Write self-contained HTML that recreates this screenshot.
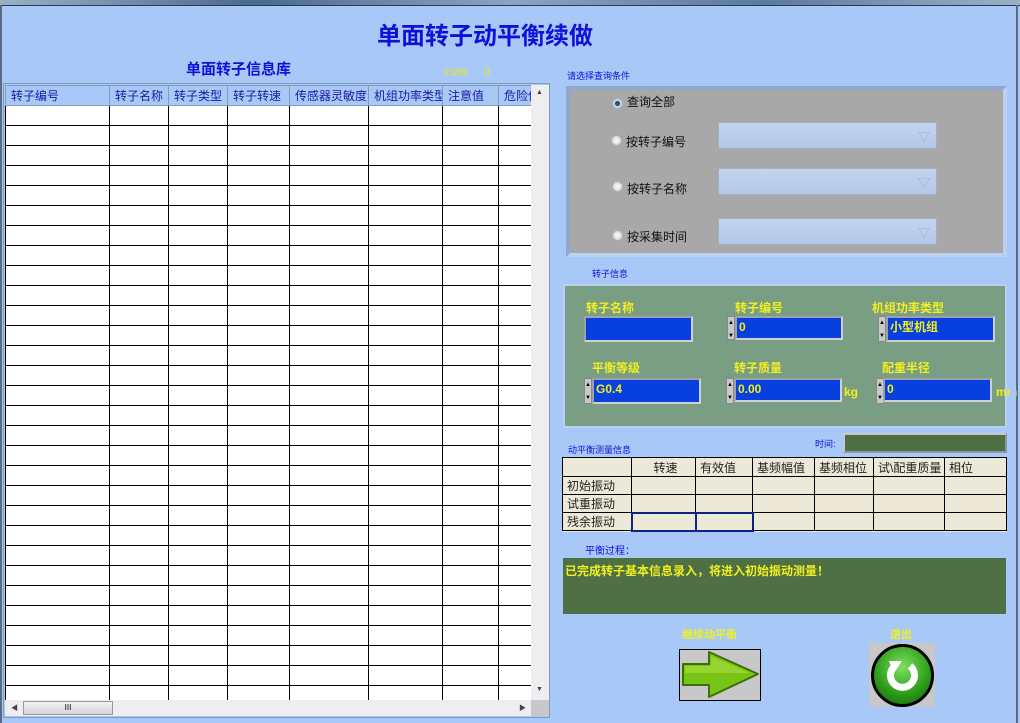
<!DOCTYPE html>
<html><head><meta charset="utf-8"><style>
*{margin:0;padding:0;box-sizing:border-box}
body{width:1020px;height:723px;background:#a8c8f8;position:relative;overflow:hidden;font-family:"Liberation Sans","Noto Sans CJK SC",sans-serif;font-size:12px}
.a{position:absolute}
.topbar{left:0;top:0;width:1020px;height:6px;background:linear-gradient(90deg,#9ab0c8,#4a6a90,#8aa4c4,#5a7aa0,#9ab0c8)}
.lb{left:0;top:5px;width:2px;height:718px;background:#5a6a80}
.rb{left:1016px;top:5px;width:2px;height:718px;background:#5a6a80}
.tb{left:0;top:5px;width:1020px;height:1px;background:#2a3a50}
#grid{left:5px;top:85px;width:526px;height:615px;overflow:hidden;background:#fff}
table.g{border-collapse:collapse;table-layout:fixed;width:560px}
table.g td{border:1px solid #000;height:20px;padding:0 0 0 5px;font-size:12px;color:#1a1aa0;white-space:nowrap;overflow:hidden}
table.g tr.h td{background:#a8c8f8;border-color:#7f9db9;height:20px}
.frame{left:3px;top:83px;width:547px;height:635px;border:1px solid #7f9db9}
.vs{left:531px;top:85px;width:18px;height:615px;background:#eeeef0}
.hs{left:5px;top:700px;width:526px;height:16px;background:#eeeef0}
.gp{left:566px;top:86px;width:441px;height:171px;background:#a8a8a8;border:4px solid #bcd0f0;border-top-color:#90a8d0;border-left-color:#90a8d0}
.combo{width:219px;height:27px;background:linear-gradient(#c4d4ee,#b4c8e8);border:1px solid #a0b0c8}
.combo:after{content:"▽";position:absolute;right:6px;top:5px;color:#a0b0c8;font-size:12px}
.radio{width:11px;height:11px;border-radius:50%;background:radial-gradient(#fff,#c8c8c8);border:1px solid #b0b0b0}
.gn{left:563px;top:284px;width:444px;height:144px;background:#7a9e84;border:2px solid #b8d0f0}
.yl{color:#f0f020;font-weight:bold;font-size:12px}
.fld{height:24px;background:#0840e0;border:2px solid #a0a0a8;border-right-color:#d0d0d0;border-bottom-color:#d0d0d0;color:#f0f020;font-weight:bold;padding-left:2px;line-height:19px}
.spin{width:8px;height:28px;background:#c8c8c8;border:1px solid #888;font-size:6px;line-height:13px;text-align:center}
table.m{border-collapse:collapse;table-layout:fixed;background:#ece9d8;width:444px}
table.m td{border:1px solid #000;height:17px;font-size:12px;color:#222;padding-left:4px;white-space:nowrap;overflow:hidden}
</style></head><body>
<div class="a topbar"></div><div class="a tb"></div><div class="a lb"></div><div class="a rb"></div>
<div class="a" style="left:0;top:16px;width:970px;text-align:center;font-size:24px;font-weight:bold;color:#1010d8">单面转子动平衡续做</div>
<div class="a" style="left:186px;top:58px;font-size:15px;font-weight:bold;color:#1010d8">单面转子信息库</div>
<div class="a" style="left:443px;top:67px;font-size:8px;color:#e8e820">记录数:</div>
<div class="a" style="left:484px;top:66px;font-size:11px;color:#e8e820">0</div>
<div class="a frame"></div>
<div class="a" id="grid"><table class="g">
<colgroup><col style="width:104px"><col style="width:59px"><col style="width:59px"><col style="width:62px"><col style="width:79px"><col style="width:74px"><col style="width:56px"><col style="width:67px"></colgroup>
<tr class="h"><td>转子编号</td><td>转子名称</td><td>转子类型</td><td>转子转速</td><td>传感器灵敏度</td><td>机组功率类型</td><td>注意值</td><td>危险值</td></tr>
<tr><td></td><td></td><td></td><td></td><td></td><td></td><td></td><td></td></tr><tr><td></td><td></td><td></td><td></td><td></td><td></td><td></td><td></td></tr><tr><td></td><td></td><td></td><td></td><td></td><td></td><td></td><td></td></tr><tr><td></td><td></td><td></td><td></td><td></td><td></td><td></td><td></td></tr><tr><td></td><td></td><td></td><td></td><td></td><td></td><td></td><td></td></tr><tr><td></td><td></td><td></td><td></td><td></td><td></td><td></td><td></td></tr><tr><td></td><td></td><td></td><td></td><td></td><td></td><td></td><td></td></tr><tr><td></td><td></td><td></td><td></td><td></td><td></td><td></td><td></td></tr><tr><td></td><td></td><td></td><td></td><td></td><td></td><td></td><td></td></tr><tr><td></td><td></td><td></td><td></td><td></td><td></td><td></td><td></td></tr><tr><td></td><td></td><td></td><td></td><td></td><td></td><td></td><td></td></tr><tr><td></td><td></td><td></td><td></td><td></td><td></td><td></td><td></td></tr><tr><td></td><td></td><td></td><td></td><td></td><td></td><td></td><td></td></tr><tr><td></td><td></td><td></td><td></td><td></td><td></td><td></td><td></td></tr><tr><td></td><td></td><td></td><td></td><td></td><td></td><td></td><td></td></tr><tr><td></td><td></td><td></td><td></td><td></td><td></td><td></td><td></td></tr><tr><td></td><td></td><td></td><td></td><td></td><td></td><td></td><td></td></tr><tr><td></td><td></td><td></td><td></td><td></td><td></td><td></td><td></td></tr><tr><td></td><td></td><td></td><td></td><td></td><td></td><td></td><td></td></tr><tr><td></td><td></td><td></td><td></td><td></td><td></td><td></td><td></td></tr><tr><td></td><td></td><td></td><td></td><td></td><td></td><td></td><td></td></tr><tr><td></td><td></td><td></td><td></td><td></td><td></td><td></td><td></td></tr><tr><td></td><td></td><td></td><td></td><td></td><td></td><td></td><td></td></tr><tr><td></td><td></td><td></td><td></td><td></td><td></td><td></td><td></td></tr><tr><td></td><td></td><td></td><td></td><td></td><td></td><td></td><td></td></tr><tr><td></td><td></td><td></td><td></td><td></td><td></td><td></td><td></td></tr><tr><td></td><td></td><td></td><td></td><td></td><td></td><td></td><td></td></tr><tr><td></td><td></td><td></td><td></td><td></td><td></td><td></td><td></td></tr><tr><td></td><td></td><td></td><td></td><td></td><td></td><td></td><td></td></tr><tr><td></td><td></td><td></td><td></td><td></td><td></td><td></td><td></td></tr>
</table></div>
<div class="a vs"><div class="a" style="left:5px;top:4px;font-size:7px;color:#444">▲</div><div class="a" style="left:5px;top:601px;font-size:7px;color:#444">▼</div></div>
<div class="a hs"><div class="a" style="left:6px;top:3px;font-size:7px;color:#444">◀</div><div class="a" style="left:18px;top:1px;width:90px;height:14px;background:linear-gradient(#f4f4f4,#d4d4d8);border:1px solid #999;text-align:center;font-size:8px;line-height:12px">III</div><div class="a" style="left:514px;top:3px;font-size:7px;color:#444">▶</div></div>
<div class="a" style="left:531px;top:700px;width:18px;height:16px;background:#c8c8cc"></div>

<div class="a" style="left:567px;top:69px;font-size:9px;color:#1010d8">请选择查询条件</div>
<div class="a gp"></div>
<div class="a radio" style="left:612px;top:98px;background:radial-gradient(#2a5070 35%,#c8d8e8 45%)"></div>
<div class="a" style="left:627px;top:93px;color:#111">查询全部</div>
<div class="a radio" style="left:611px;top:135px"></div><div class="a" style="left:626px;top:133px;color:#111">按转子编号</div>
<div class="a radio" style="left:612px;top:181px"></div><div class="a" style="left:627px;top:180px;color:#111">按转子名称</div>
<div class="a radio" style="left:612px;top:230px"></div><div class="a" style="left:627px;top:228px;color:#111">按采集时间</div>
<div class="a combo" style="left:718px;top:122px"></div>
<div class="a combo" style="left:718px;top:168px"></div>
<div class="a combo" style="left:718px;top:218px"></div>

<div class="a" style="left:592px;top:267px;font-size:9px;color:#1010d8">转子信息</div>
<div class="a gn"></div>
<div class="a yl" style="left:586px;top:299px">转子名称</div>
<div class="a yl" style="left:735px;top:299px">转子编号</div>
<div class="a yl" style="left:872px;top:299px">机组功率类型</div>
<div class="a fld" style="left:584px;top:316px;width:109px;height:26px"></div>
<div class="a spin" style="left:727px;top:316px;height:24px">▲<br>▼</div><div class="a fld" style="left:735px;top:316px;width:108px">0</div>
<div class="a spin" style="left:878px;top:316px;height:26px">▲<br>▼</div><div class="a fld" style="left:886px;top:316px;width:109px;height:26px">小型机组</div>
<div class="a yl" style="left:592px;top:359px">平衡等级</div>
<div class="a yl" style="left:734px;top:359px">转子质量</div>
<div class="a yl" style="left:882px;top:359px">配重半径</div>
<div class="a spin" style="left:584px;top:378px;height:26px">▲<br>▼</div><div class="a fld" style="left:592px;top:378px;width:109px;height:26px">G0.4</div>
<div class="a spin" style="left:726px;top:378px;height:26px">▲<br>▼</div><div class="a fld" style="left:734px;top:378px;width:108px;height:24px">0.00</div>
<div class="a yl" style="left:844px;top:385px">kg</div>
<div class="a spin" style="left:876px;top:378px;height:26px">▲<br>▼</div><div class="a fld" style="left:883px;top:378px;width:109px;height:24px">0</div>
<div class="a yl" style="left:996px;top:385px">mm</div>
<div class="a" style="left:1010px;top:284px;width:6px;height:150px;background:#a8c8f8"></div>

<div class="a" style="left:568px;top:443px;font-size:9px;color:#1010d8">动平衡测量信息</div>
<div class="a" style="left:815px;top:437px;font-size:9px;color:#1010d8">时间:</div>
<div class="a" style="left:843px;top:433px;width:164px;height:20px;background:#4e6e44;border:2px solid #c8c8c8;border-right-color:#8898a8;border-bottom-color:#8898a8"></div>
<div class="a" style="left:562px;top:457px"><table class="m">
<colgroup><col style="width:69px"><col style="width:64px"><col style="width:57px"><col style="width:62px"><col style="width:59px"><col style="width:71px"><col style="width:62px"></colgroup>
<tr><td style="height:19px"></td><td style="text-align:center">转速</td><td>有效值</td><td>基频幅值</td><td>基频相位</td><td>试\配重质量</td><td>相位</td></tr>
<tr><td>初始振动</td><td></td><td></td><td></td><td></td><td></td><td></td></tr>
<tr><td>试重振动</td><td></td><td></td><td></td><td></td><td></td><td></td></tr>
<tr><td>残余振动</td><td style="border:2px solid #102080"></td><td style="border:2px solid #102080"></td><td></td><td></td><td></td><td></td></tr>
</table></div>

<div class="a" style="left:585px;top:542px;font-size:10px;color:#1010d8">平衡过程：</div>
<div class="a" style="left:563px;top:558px;width:443px;height:56px;background:#4e7044;color:#f0f020;font-weight:bold;padding:4px 2px">已完成转子基本信息录入，将进入初始振动测量！</div>

<div class="a" style="left:682px;top:626px;font-size:11px;color:#f0f020;font-weight:bold">继续动平衡</div>
<div class="a" style="left:890px;top:626px;font-size:11px;color:#f0f020;font-weight:bold">退出</div>
<div class="a" style="left:679px;top:649px;width:82px;height:52px;background:#c8c8c8;border:1px solid #000">
<svg width="80" height="50" viewBox="0 0 80 50"><path d="M3 14 H29 V2 L78 24 L29 47 V35 H3 Z" fill="#7ac418" stroke="#3a7008" stroke-width="2" stroke-linejoin="round"/><path d="M5 16 H31 V6 L70 23 H5Z" fill="#a8e040" opacity=".6"/></svg></div>
<div class="a" style="left:869px;top:643px;width:66px;height:64px;background:#c8c8c8"></div>
<div class="a" style="left:871px;top:644px;width:63px;height:63px;border-radius:50%;background:radial-gradient(circle at 50% 35%,#7ee060,#2a9a18 60%,#106008);border:3px solid #000"></div>
<svg class="a" style="left:880px;top:653px" width="45" height="45" viewBox="0 0 45 45"><path d="M15 13 A12 12 0 1 0 30 13" fill="none" stroke="#fff" stroke-width="7"/><path d="M9 8 L22 8 L14 20Z" fill="#fff"/></svg>
</body></html>
